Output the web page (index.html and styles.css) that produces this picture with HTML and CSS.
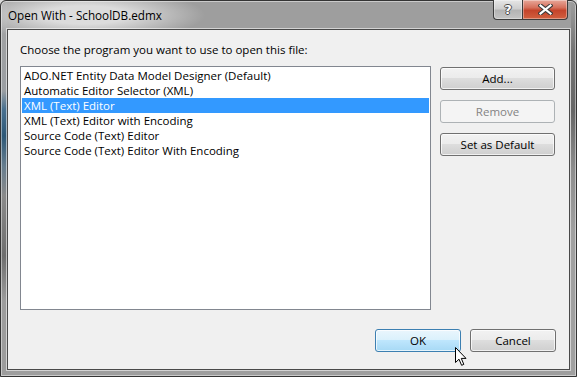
FILE: index.html
```html
<!DOCTYPE html>
<html lang="en">
<head>
  <meta charset="UTF-8">
  <title>Open With - SchoolDB.edmx</title>
  <link rel="stylesheet" href="styles.css">
</head>
<body>

<div class="window">
  <div class="titlebar">
    <span class="title">Open With - SchoolDB.edmx</span>
    <div class="caption-buttons">
      <button class="cap-btn help">?</button>
      <button class="cap-btn close">
        <svg width="15" height="11" viewBox="0 0 15 11">
          <path d="M2.5 1.5 L12.5 9.5 M12.5 1.5 L2.5 9.5" stroke="#3a3a3a" stroke-width="4.2" stroke-linecap="square" fill="none"/>
          <path d="M2.5 1.5 L12.5 9.5 M12.5 1.5 L2.5 9.5" stroke="#fff" stroke-width="2.2" stroke-linecap="square" fill="none"/>
        </svg>
      </button>
    </div>
  </div>

  <div class="client">
    <div class="prompt">Choose the program you want to use to open this file:</div>

    <div class="body-row">
      <ul class="program-list">
        <li>ADO.NET Entity Data Model Designer (Default)</li>
        <li>Automatic Editor Selector (XML)</li>
        <li class="selected">XML (Text) Editor</li>
        <li>XML (Text) Editor with Encoding</li>
        <li>Source Code (Text) Editor</li>
        <li>Source Code (Text) Editor With Encoding</li>
      </ul>

      <div class="side-buttons">
        <button class="btn">Add...</button>
        <button class="btn" disabled>Remove</button>
        <button class="btn">Set as Default</button>
      </div>
    </div>

    <div class="footer">
      <button class="btn dialog-btn hot">OK</button>
      <button class="btn dialog-btn">Cancel</button>
    </div>
  </div>

  <!-- mouse pointer over OK -->
  <svg class="pointer" width="13" height="20" viewBox="0 0 13 20">
    <path d="M0.5 0.5 L0.5 15.5 L4 12.2 L6.6 18.3 L8.8 17.4 L6.3 11.4 L11 11.4 Z" fill="#fff" stroke="#000" stroke-width="1" stroke-linejoin="miter"/>
  </svg>
</div>

</body>
</html>
```

FILE: styles.css
```css
html, body {
  margin: 0;
  padding: 0;
  background: #d9d9d9;
  overflow: hidden;
}

body {
  width: 577px;
  height: 377px;
  font-family: "Segoe UI", "Open Sans", sans-serif;
  font-size: 11.5px;
  color: #000;
}

.window {
  position: relative;
  width: 577px;
  height: 377px;
  box-sizing: border-box;
  border: 1px solid #343434;
  border-radius: 6px 6px 0 0;
  padding: 0 6px 6px;
  display: flex;
  flex-direction: column;
  box-shadow: inset 0 0 0 1px rgba(255, 255, 255, 0.45);
  background:
    radial-gradient(ellipse 120px 26px at 84px 14px, #dcdcdc 35%, rgba(220, 220, 220, 0) 100%) no-repeat,
    linear-gradient(to bottom, #a4a4a4 0, #9a9ea2 90px, #4a7190 108px, #2d5877 135px, #667d8e 165px, #8a8a8a 195px, #6e6e6e 255px, #9c9c9c 300px) left top / 6px 100% no-repeat,
    linear-gradient(to bottom, #9e9e9e 0, #747474 50px, #666 110px, #8e8e8e 170px, #a0a0a0 230px) right top / 5px 100% no-repeat,
    #9e9e9e;
}

/* title bar */
.titlebar {
  height: 28px;
  display: flex;
  justify-content: space-between;
  align-items: flex-start;
}

.title {
  margin-top: 6px;
  margin-left: 1px;
  font-size: 11.7px;
  line-height: 16px;
  color: #000;
}

.caption-buttons {
  display: flex;
  margin-top: -1px;
  margin-right: 2px;
}

.cap-btn {
  height: 20px;
  padding: 0;
  border: 1px solid #3c3c3c;
  border-top: none;
  display: flex;
  align-items: center;
  justify-content: center;
  box-shadow: inset 0 0 0 1px rgba(255, 255, 255, 0.35);
}

.help {
  width: 29px;
  border-right: none;
  border-radius: 0 0 0 4px;
  background: linear-gradient(to bottom, #e6e6e6 0, #cfcfcf 45%, #b4b4b4 55%, #c4c4c4 100%);
  color: #fff;
  font-family: "DejaVu Sans", sans-serif;
  font-weight: bold;
  font-size: 13px;
  line-height: 16px;
  text-shadow: 1px 0 0 #4a4a4a, -1px 0 0 #4a4a4a, 0 1px 0 #4a4a4a, 0 -1px 0 #4a4a4a;
}

.close {
  width: 46px;
  border-radius: 0 0 4px 0;
  background: linear-gradient(to bottom, #e8a89a 0, #d6705c 40%, #c4442b 55%, #d2603f 100%);
}

/* client area */
.client {
  height: 341px;
  box-sizing: border-box;
  border: 1px solid #494949;
  background: #f0f0f0;
  box-shadow: 0 0 0 1px rgba(255, 255, 255, 0.55);
  padding: 12px 13px 17px 12px;
  display: flex;
  flex-direction: column;
}

.prompt {
  line-height: 15px;
  height: 15px;
}

.body-row {
  display: flex;
  margin-top: 9px;
}

.program-list {
  list-style: none;
  margin: 0;
  padding: 1px;
  width: 411px;
  height: 244px;
  box-sizing: border-box;
  border: 1px solid #828790;
  background: #fff;
}

.program-list li {
  height: 15px;
  line-height: 15px;
  padding-left: 2px;
  white-space: nowrap;
}

.program-list li.selected {
  background: #3399ff;
  color: #fff;
}

.side-buttons {
  display: flex;
  flex-direction: column;
  gap: 10px;
  margin-left: 9px;
  margin-top: 1px;
}

.btn {
  width: 115px;
  height: 23px;
  padding: 0;
  box-sizing: border-box;
  border: 1px solid #707070;
  border-radius: 3px;
  background: linear-gradient(to bottom, #f2f2f2 0, #ebebeb 50%, #dddddd 50%, #cfcfcf 100%);
  box-shadow: inset 0 0 0 1px rgba(255, 255, 255, 0.7);
  font-family: inherit;
  font-size: 11.5px;
  color: #000;
}

.btn:disabled {
  border-color: #adb2b5;
  background: #f4f4f4;
  box-shadow: none;
  color: #838383;
}

.footer {
  display: flex;
  justify-content: flex-end;
  gap: 9px;
  margin-top: 19px;
}

.dialog-btn {
  width: 86px;
}

.dialog-btn.hot {
  border-color: #3c7fb1;
  background: linear-gradient(to bottom, #eaf6fd 0, #d9f0fc 50%, #bee6fd 50%, #a7d9f5 100%);
}

.pointer {
  position: absolute;
  left: 454px;
  top: 346px;
}
```
